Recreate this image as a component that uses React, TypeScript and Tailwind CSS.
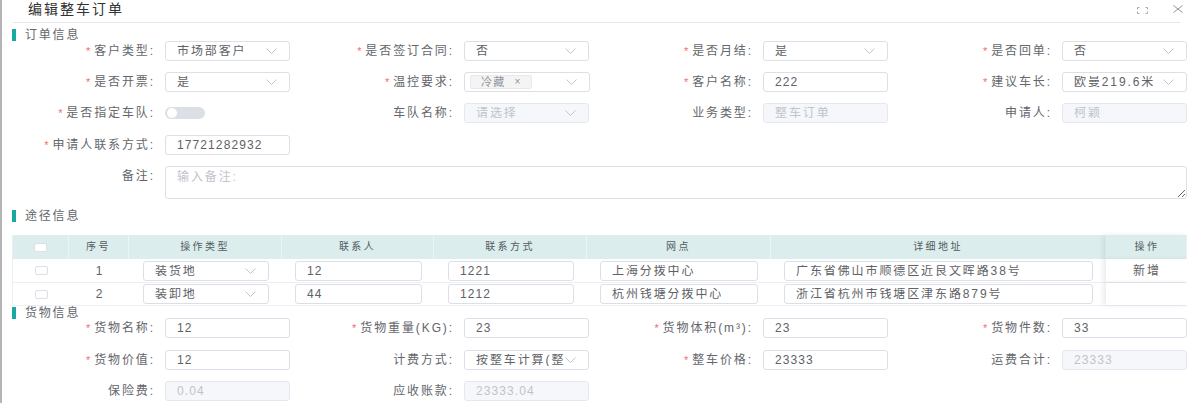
import type { ReactNode } from 'react'

const isNum = (v: string) => /^[\d.]+$/.test(v)

function Chevron() {
  return (
    <svg width="11" height="6" viewBox="0 0 11 6" className="shrink-0">
      <path d="M0.5 0.5L5.5 5.5L10.5 0.5" fill="none" stroke="#c0c4cc" strokeWidth="1" />
    </svg>
  )
}

interface BoxProps {
  value?: string
  placeholder?: string
  select?: boolean
  disabled?: boolean
  className?: string
  children?: ReactNode
}

function Box({ value, placeholder, select, disabled, className = 'w-[125px]', children }: BoxProps) {
  const text = value ?? placeholder ?? ''
  const color = disabled || !value ? 'text-[#c0c4cc]' : 'text-[#606266]'
  return (
    <div
      className={`flex h-[20px] shrink-0 items-center rounded-[3px] border pl-[11px] pr-[12px] ${className} ${
        disabled ? 'border-[#e4e7ed] bg-[#f5f7fa]' : 'border-[#dcdfe6] bg-white'
      }`}
    >
      {children ?? (
        <span
          className={`min-w-0 flex-1 overflow-hidden whitespace-nowrap text-[12px] leading-none ${
            isNum(text) ? 'tracking-[1.1px]' : 'tracking-[1.9px]'
          } ${color}`}
        >
          {text}
        </span>
      )}
      {select && <Chevron />}
    </div>
  )
}

function Field({ label, req, children }: { label: string; req?: boolean; children?: ReactNode }) {
  return (
    <div className="flex w-[299px] shrink-0 items-center">
      <div className="w-[165px] shrink-0 whitespace-nowrap pr-[10px] text-right text-[12px] leading-none tracking-[1.9px] text-[#63666b]">
        {req && <span className="mr-[2px] text-[11px] text-[#f56c6c]">*</span>}
        {label}:
      </div>
      {children}
    </div>
  )
}

function Section({ title, className = '' }: { title: string; className?: string }) {
  return (
    <div className={`ml-[10px] flex items-center ${className}`}>
      <div className="h-[12px] w-[4px] bg-[#1aa8a0]" />
      <span className="ml-[9px] text-[12px] leading-none tracking-[1.8px] text-[#63666b]">{title}</span>
    </div>
  )
}

function Checkbox() {
  return <div className="h-[9px] w-[13px] rounded-[2px] border border-[#dcdfe6] bg-white" />
}

const cols = [
  { w: 'w-[56px]', t: '' },
  { w: 'w-[60px]', t: '序号' },
  { w: 'w-[153px]', t: '操作类型' },
  { w: 'w-[152px]', t: '联系人' },
  { w: 'w-[153px]', t: '联系方式' },
  { w: 'w-[184px]', t: '网点' },
  { w: 'w-[335px]', t: '详细地址' },
]

const routes = [
  { n: '1', type: '装货地', contact: '12', phone: '1221', site: '上海分拨中心', addr: '广东省佛山市顺德区近良文晖路38号', op: '新增', h: 'h-[24px]' },
  { n: '2', type: '装卸地', contact: '44', phone: '1212', site: '杭州钱塘分拨中心', addr: '浙江省杭州市钱塘区津东路879号', op: '', h: 'h-[23px]' },
]

export default function App() {
  return (
    <div className="relative h-[403px] w-[1197px] overflow-hidden border-l-2 border-[#b4b4b4] bg-white font-['Liberation_Sans','Noto_Sans_CJK_SC',sans-serif]">
      {/* header */}
      <div className="flex h-[18px] items-center pl-[26px] pr-[14px]">
        <h1 className="whitespace-nowrap text-[14px] font-normal leading-[14px] tracking-[2px] text-[#303133]">编辑整车订单</h1>
        <div className="ml-auto flex items-center gap-[25px]">
          <svg width="11" height="7" viewBox="0 0 11 7" className="mt-[3px]">
            <path
              d="M0.5 2.5V0.5H2.5M8.5 0.5H10.5V2.5M10.5 4.5V6.5H8.5M2.5 6.5H0.5V4.5"
              fill="none"
              stroke="#a8abb2"
              strokeWidth="1"
            />
          </svg>
          <svg width="10" height="8" viewBox="0 0 10 8">
            <path d="M0.5 0.5L9.5 7.5M9.5 0.5L0.5 7.5" fill="none" stroke="#909399" strokeWidth="1" />
          </svg>
        </div>
      </div>
      <div className="ml-[11px] mt-[4px] h-px w-[1167px] bg-[#e4e7ed]" />

      {/* 订单信息 */}
      <Section title="订单信息" className="mt-[6px] h-[12px]" />
      <div className="-ml-[2px]">
        <div className="flex h-[20px]">
          <Field label="客户类型" req>
            <Box value="市场部客户" select />
          </Field>
          <Field label="是否签订合同" req>
            <Box value="否" select />
          </Field>
          <Field label="是否月结" req>
            <Box value="是" select />
          </Field>
          <Field label="是否回单" req>
            <Box value="否" select />
          </Field>
        </div>
        <div className="mt-[11px] flex h-[20px]">
          <Field label="是否开票" req>
            <Box value="是" select />
          </Field>
          <Field label="温控要求" req>
            <Box select className="w-[126px] !pl-[5px]">
              <div className="flex min-w-0 flex-1">
                <span className="flex h-[14px] w-[62px] items-center rounded-[2px] border border-[#e9e9eb] bg-[#f4f4f5] pl-[10px] text-[11px] leading-none tracking-[1.2px] text-[#909399]">
                  冷藏
                  <span className="ml-[9px] text-[10px]">×</span>
                </span>
              </div>
            </Box>
          </Field>
          <Field label="客户名称" req>
            <Box value="222" />
          </Field>
          <Field label="建议车长" req>
            <Box value="欧曼219.6米" select />
          </Field>
        </div>
        <div className="mt-[11px] flex h-[20px]">
          <Field label="是否指定车队" req>
            <div className="flex h-[12px] w-[40px] items-center rounded-full bg-[#dcdfe6] pl-[2px]">
              <div className="h-[10px] w-[10px] rounded-full bg-white" />
            </div>
          </Field>
          <Field label="车队名称">
            <Box placeholder="请选择" select disabled />
          </Field>
          <Field label="业务类型">
            <Box value="整车订单" disabled />
          </Field>
          <Field label="申请人">
            <Box value="柯颖" disabled />
          </Field>
        </div>
        <div className="mt-[12px] flex h-[20px]">
          <Field label="申请人联系方式" req>
            <Box value="17721282932" />
          </Field>
        </div>
        <div className="mt-[11px] flex">
          <div className="w-[165px] shrink-0 pr-[10px] pt-[4px] text-right text-[12px] leading-none tracking-[1.9px] text-[#63666b]">
            备注:
          </div>
          <textarea
            placeholder="输入备注:"
            className="block h-[33px] w-[1022px] rounded-[3px] border border-[#dcdfe6] px-[11px] py-[2px] text-[12px] leading-[16px] tracking-[1.9px] text-[#606266] outline-none placeholder:text-[#c0c4cc]"
          />
        </div>
      </div>

      {/* 途径信息 */}
      <Section title="途径信息" className="mt-[11px] h-[12px]" />
      <div className="ml-[10px] mt-[13px] w-[1175px] border-x border-[#ebeef5]">
        <div className="flex h-[24px] bg-[#dbeeed] text-[10px] font-normal leading-none tracking-[2.4px] text-[#555a60]">
          {cols.map((c, i) => (
            <div key={i} className={`${c.w} flex shrink-0 items-center justify-center border-r border-[#eaf5f4]`}>
              {i === 0 ? <Checkbox /> : c.t}
            </div>
          ))}
          <div className="relative flex w-[82px] shrink-0 items-center justify-center shadow-[-3px_0_5px_rgba(0,0,0,0.08)]">
            操作
          </div>
        </div>
        {routes.map((r) => (
          <div key={r.n} className={`flex ${r.h} border-b border-[#ebeef5] text-[12px] leading-none text-[#606266]`}>
            <div className="flex w-[56px] shrink-0 items-center justify-center">
              <Checkbox />
            </div>
            <div className="flex w-[60px] shrink-0 items-center justify-center">{r.n}</div>
            <div className="flex w-[153px] shrink-0 items-center pl-[14px]">
              <Box value={r.type} select className="w-[126px]" />
            </div>
            <div className="flex w-[152px] shrink-0 items-center pl-[13px]">
              <Box value={r.contact} className="w-[127px]" />
            </div>
            <div className="flex w-[153px] shrink-0 items-center pl-[14px]">
              <Box value={r.phone} className="w-[126px]" />
            </div>
            <div className="flex w-[184px] shrink-0 items-center pl-[13px]">
              <Box value={r.site} className="w-[158px]" />
            </div>
            <div className="flex w-[335px] shrink-0 items-center pl-[13px]">
              <Box value={r.addr} className="w-[309px]" />
            </div>
            <div className="relative flex w-[82px] shrink-0 items-center justify-center bg-white tracking-[1.9px] shadow-[-3px_0_5px_rgba(0,0,0,0.08)]">
              {r.op}
            </div>
          </div>
        ))}
      </div>

      {/* 货物信息 */}
      <Section title="货物信息" className="mt-[1px] h-[11px]" />
      <div className="-ml-[2px]">
        <div className="flex h-[20px]">
          <Field label="货物名称" req>
            <Box value="12" />
          </Field>
          <Field label="货物重量(KG)" req>
            <Box value="23" />
          </Field>
          <Field label="货物体积(m³)" req>
            <Box value="23" />
          </Field>
          <Field label="货物件数" req>
            <Box value="33" />
          </Field>
        </div>
        <div className="mt-[12px] flex h-[20px]">
          <Field label="货物价值" req>
            <Box value="12" />
          </Field>
          <Field label="计费方式">
            <Box value="按整车计算(整车)" select />
          </Field>
          <Field label="整车价格" req>
            <Box value="23333" />
          </Field>
          <Field label="运费合计">
            <Box value="23333" disabled />
          </Field>
        </div>
        <div className="mt-[11px] flex h-[20px]">
          <Field label="保险费">
            <Box value="0.04" disabled />
          </Field>
          <Field label="应收账款">
            <Box value="23333.04" disabled />
          </Field>
        </div>
      </div>
    </div>
  )
}
